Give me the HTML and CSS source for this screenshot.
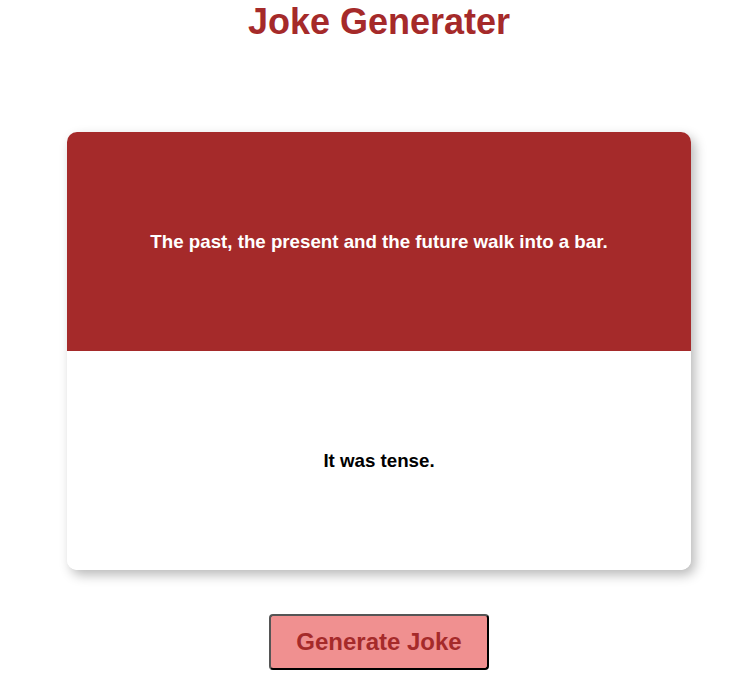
FILE: index.html
```html
<!DOCTYPE html>
<html lang="en">
<head>
<meta charset="utf-8">
<title>Joke Generater</title>
<link rel="stylesheet" href="styles.css">
</head>
<body>
<main class="page">
  <h1 class="title">Joke Generater</h1>
  <section class="card">
    <div class="setup"><h3>The past, the present and the future walk into a bar.</h3></div>
    <div class="punchline"><h3>It was tense.</h3></div>
  </section>
  <button class="btn" type="button">Generate Joke</button>
</main>
</body>
</html>
```
FILE: styles.css
```css
html, body {
  margin: 0;
  padding: 0;
  background: #ffffff;
}
body {
  font-family: "Liberation Sans", Arial, sans-serif;
  padding-left: 19px;
}
.page {
  display: flex;
  flex-direction: column;
  align-items: center;
}
.title {
  margin: 1px 0 0;
  font-size: 36px;
  line-height: 41px;
  font-weight: 700;
  color: #a52a2a;
}
.card {
  margin-top: 90px;
  width: 624px;
  border-radius: 10px;
  overflow: hidden;
  box-shadow: 4px 5px 12px rgba(0, 0, 0, 0.28);
  background: #fff;
}
.setup, .punchline {
  height: 219px;
  display: flex;
  align-items: center;
  justify-content: center;
  text-align: center;
}
.setup {
  background: #a52a2a;
  color: #fff;
}
.punchline {
  background: #fff;
  color: #000;
}
.setup h3, .punchline h3 {
  margin: 0;
  font-size: 18.72px;
  font-weight: 700;
}
.btn {
  margin-top: 44px;
  font-family: "Liberation Sans", Arial, sans-serif;
  font-size: 24px;
  font-weight: 700;
  line-height: 28px;
  color: #a52a2a;
  background: #f09090;
  padding: 12px 25px;
  border: 2px solid;
  border-color: #555 #000 #000 #555;
  border-radius: 4px;
}
```
